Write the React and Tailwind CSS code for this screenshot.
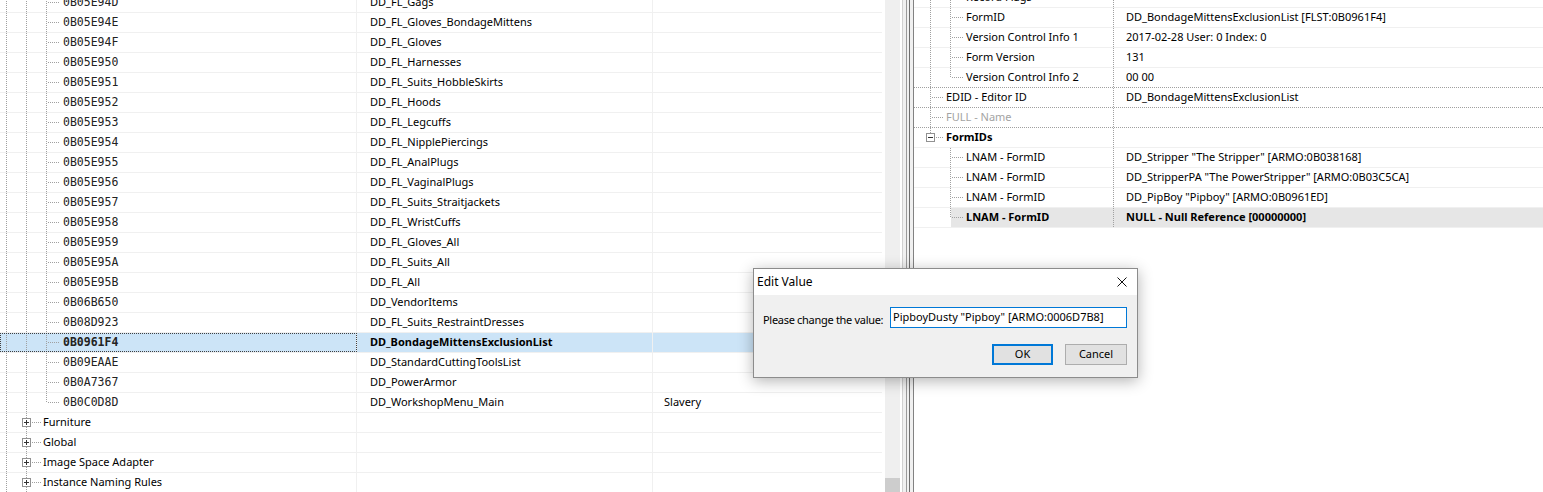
import React from "react";

const sans = "font-['Segoe_UI','Noto_Sans',Arial,sans-serif] text-[11px]";
const mono = "font-['DejaVu_Sans_Mono',monospace] text-[11.5px]";
const dot = "#a0a0a0";

const leaves = [
  ["0B05E94D", "DD_FL_Gags"],
  ["0B05E94E", "DD_FL_Gloves_BondageMittens"],
  ["0B05E94F", "DD_FL_Gloves"],
  ["0B05E950", "DD_FL_Harnesses"],
  ["0B05E951", "DD_FL_Suits_HobbleSkirts"],
  ["0B05E952", "DD_FL_Hoods"],
  ["0B05E953", "DD_FL_Legcuffs"],
  ["0B05E954", "DD_FL_NipplePiercings"],
  ["0B05E955", "DD_FL_AnalPlugs"],
  ["0B05E956", "DD_FL_VaginalPlugs"],
  ["0B05E957", "DD_FL_Suits_Straitjackets"],
  ["0B05E958", "DD_FL_WristCuffs"],
  ["0B05E959", "DD_FL_Gloves_All"],
  ["0B05E95A", "DD_FL_Suits_All"],
  ["0B05E95B", "DD_FL_All"],
  ["0B06B650", "DD_VendorItems"],
  ["0B08D923", "DD_FL_Suits_RestraintDresses"],
  ["0B0961F4", "DD_BondageMittensExclusionList"],
  ["0B09EAAE", "DD_StandardCuttingToolsList"],
  ["0B0A7367", "DD_PowerArmor"],
  ["0B0C0D8D", "DD_WorkshopMenu_Main", "Slavery"],
];

const groups = ["Furniture", "Global", "Image Space Adapter", "Instance Naming Rules"];

const details = [
  { lvl: 2, label: "Record Flags", value: "" },
  { lvl: 2, label: "FormID", value: "DD_BondageMittensExclusionList [FLST:0B0961F4]" },
  { lvl: 2, label: "Version Control Info 1", value: "2017-02-28 User: 0 Index: 0" },
  { lvl: 2, label: "Form Version", value: "131" },
  { lvl: 2, label: "Version Control Info 2", value: "00 00", last: true, dotted: true },
  { lvl: 1, label: "EDID - Editor ID", value: "DD_BondageMittensExclusionList", dotted: true },
  { lvl: 1, label: "FULL - Name", value: "", gray: true, dotted: true },
  { lvl: 1, label: "FormIDs", value: "", bold: true, box: true },
  { lvl: 2, label: "LNAM - FormID", value: 'DD_Stripper "The Stripper" [ARMO:0B038168]' },
  { lvl: 2, label: "LNAM - FormID", value: 'DD_StripperPA "The PowerStripper" [ARMO:0B03C5CA]' },
  { lvl: 2, label: "LNAM - FormID", value: 'DD_PipBoy "Pipboy" [ARMO:0B0961ED]' },
  { lvl: 2, label: "LNAM - FormID", value: "NULL - Null Reference [00000000]", last: true, bold: true, selected: true },
];

function VLine({ x, half }) {
  return <line x1={x} y1="0" x2={x} y2={half ? 10 : 19} stroke={dot} strokeDasharray="1 1" shapeRendering="crispEdges" />;
}

function HLine({ x1, x2 }) {
  return <line x1={x1} y1="9.5" x2={x2} y2="9.5" stroke={dot} strokeDasharray="1 1" shapeRendering="crispEdges" />;
}

function Box({ cx, plus }) {
  return (
    <g shapeRendering="crispEdges">
      <rect x={cx - 4} y="5.5" width="8" height="8" fill="white" stroke="#919191" />
      <line x1={cx - 2.5} y1="9.5" x2={cx + 2.5} y2="9.5" stroke="#333" />
      {plus && <line x1={cx} y1="7" x2={cx} y2="12" stroke="#333" />}
    </g>
  );
}

function LeafRow({ id, name, extra, selected, last }) {
  const bg = selected ? "bg-[#cce4f7]" : "";
  return (
    <div className="h-[20px] flex border-b border-[#f0f0f0]">
      <div
        className={`w-[357px] shrink-0 flex items-center border-r border-[#f0f0f0] ${bg} ${
          selected ? "outline-1 outline-dotted outline-[#404040] -outline-offset-1" : ""
        }`}
      >
        <svg width="60" height="19" className="shrink-0">
          <VLine x={6.5} />
          <VLine x={26.5} />
          <VLine x={46.5} half={last} />
          <HLine x1={48} x2={59} />
        </svg>
        <span className={`${mono} pl-[3px] text-[#222] ${selected ? "font-bold" : ""}`}>{id}</span>
      </div>
      <div className={`w-[295px] shrink-0 flex items-center pl-[13px] ${bg}`}>
        <span className={`${sans} ${selected ? "font-bold" : ""}`}>{name}</span>
      </div>
      <div className={`flex-1 flex items-center pl-[11px] border-l border-[#f0f0f0] ${bg}`}>
        <span className={sans}>{extra}</span>
      </div>
    </div>
  );
}

function GroupRow({ name }) {
  return (
    <div className="h-[20px] flex border-b border-[#f0f0f0]">
      <div className="w-[357px] shrink-0 flex items-center border-r border-[#f0f0f0]">
        <svg width="41" height="19" className="shrink-0">
          <VLine x={6.5} />
          <VLine x={26.5} />
          <HLine x1={32} x2={41} />
          <Box cx={26.5} plus />
        </svg>
        <span className={`${sans} pl-[2px]`}>{name}</span>
      </div>
      <div className="w-[295px] shrink-0" />
      <div className="flex-1 border-l border-[#f0f0f0]" />
    </div>
  );
}

function DetailRow({ row, index }) {
  const l1Line = index <= 7;
  const l1Half = index === 7;
  const l2Line = row.lvl === 2;
  const width = row.lvl === 2 ? 52 : 32;
  return (
    <div
      className={`h-[20px] flex border-b ${
        row.dotted ? "border-dotted border-[#a0a0a0]" : "border-[#f0f0f0]"
      }`}
    >
      <div className="w-[199px] shrink-0 flex items-center">
        <svg width={width} height="19" className="shrink-0">
          {row.selected && <rect x="37" y="0" width="15" height="19" fill="#e6e6e6" />}
          {l1Line && !row.box && <VLine x={16.5} half={l1Half} />}
          {row.box && <line x1="16.5" y1="0" x2="16.5" y2="5" stroke={dot} strokeDasharray="1 1" shapeRendering="crispEdges" />}
          {row.lvl === 1 && <HLine x1={row.box ? 22 : 18} x2={29} />}
          {row.box && <Box cx={16.5} />}
          {l2Line && <VLine x={36.5} half={row.last} />}
          {l2Line && <HLine x1={38} x2={49} />}
        </svg>
        <div className={`flex-1 h-full flex items-center ${row.selected ? "bg-[#e6e6e6]" : ""}`}>
          <span
            className={`${sans} ${row.bold ? "font-bold" : ""} ${row.gray ? "text-[#a3a3a3]" : ""}`}
          >
            {row.label}
          </span>
        </div>
      </div>
      <div
        className={`flex-1 flex items-center pl-[12px] border-l border-dotted border-[#a0a0a0] ${
          row.selected ? "bg-[#e6e6e6]" : ""
        }`}
      >
        <span className={`${sans} whitespace-nowrap ${row.bold ? "font-bold" : ""}`}>{row.value}</span>
      </div>
    </div>
  );
}

function EditDialog() {
  return (
    <div className="absolute left-[753px] top-[268px] w-[385px] h-[110px] border border-[#8c8c8c] bg-[#f0f0f0] shadow-[0_3px_14px_rgba(0,0,0,0.3)] flex flex-col">
      <div className="h-[26px] bg-white flex items-center justify-between pl-[3px] pr-[10px]">
        <span className={`${sans} text-[12px]`}>Edit Value</span>
        <svg width="10" height="10" viewBox="0 0 10 10">
          <path d="M0.5 0.5 L9.5 9.5 M9.5 0.5 L0.5 9.5" stroke="#111" strokeWidth="1" fill="none" />
        </svg>
      </div>
      <div className="flex-1 flex flex-col pt-[12px] pl-[9px] pr-[10px]">
        <div className="flex items-center h-[21px]">
          <div className="w-[127px] shrink-0">
            <span className={`${sans} whitespace-nowrap tracking-[-0.3px]`}>Please change the value:</span>
          </div>
          <div className="w-[238px] h-[21px] bg-white border border-[#0078d7] flex items-center pl-[2px]">
            <span className={`${sans} whitespace-nowrap`}>PipboyDusty "Pipboy" [ARMO:0006D7B8]</span>
          </div>
        </div>
        <div className="mt-[16px] flex justify-end gap-[12px]">
          <div className={`${sans} w-[61px] h-[21px] border-2 border-[#0078d7] bg-[#e1e1e1] flex items-center justify-center`}>
            OK
          </div>
          <div className={`${sans} w-[62px] h-[21px] border border-[#adadad] bg-[#e1e1e1] flex items-center justify-center`}>
            Cancel
          </div>
        </div>
      </div>
    </div>
  );
}

export default function App() {
  return (
    <div className="relative w-[1543px] h-[492px] overflow-hidden bg-white flex text-black">
      {/* Left record tree */}
      <div className="w-[885px] h-full overflow-hidden shrink-0">
        <div className="-mt-[7px] w-[882px]">
          {leaves.map(([id, name, extra], i) => (
            <LeafRow
              key={id}
              id={id}
              name={name}
              extra={extra}
              selected={id === "0B0961F4"}
              last={i === leaves.length - 1}
            />
          ))}
          {groups.map((g) => (
            <GroupRow key={g} name={g} />
          ))}
        </div>
      </div>

      {/* Scrollbar */}
      <div className="w-[15px] h-full bg-[#efefef] flex flex-col justify-end shrink-0">
        <div className="h-[14px] bg-[#cdcdcd]" />
      </div>

      {/* Splitter */}
      <div className="w-[13px] h-full flex shrink-0">
        <div className="w-[2px] bg-white" />
        <div className="w-[1px] bg-[#d0d0d0]" />
        <div className="w-[3px] bg-[#f0f0f0]" />
        <div className="w-[1px] bg-[#9a9a9a]" />
        <div className="w-[2px] bg-[#f0f0f0]" />
        <div className="w-[1px] bg-[#6e6e6e]" />
        <div className="w-[3px] bg-[#f0f0f0]" />
      </div>

      {/* Right detail view */}
      <div className="flex-1 h-full overflow-hidden border-l border-[#828282]">
        <div className="-mt-[12px]">
          {details.map((row, i) => (
            <DetailRow key={i} row={row} index={i} />
          ))}
        </div>
      </div>

      <EditDialog />
    </div>
  );
}
